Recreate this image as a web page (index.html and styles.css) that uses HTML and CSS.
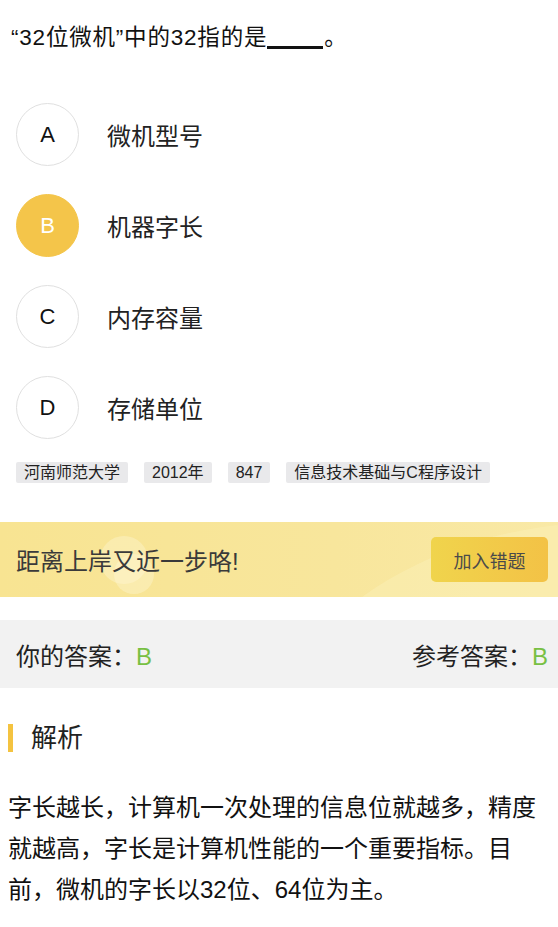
FILE: index.html
```html
<!DOCTYPE html>
<html lang="zh">
<head>
<meta charset="utf-8">
<link rel="stylesheet" href="styles.css">
</head>
<body>
<div class="page">
  <div class="question">“32位微机”中的32指的是<span class="blank"></span>。</div>
  <ul class="options">
    <li class="option"><span class="letter">A</span><span class="label">微机型号</span></li>
    <li class="option selected"><span class="letter">B</span><span class="label">机器字长</span></li>
    <li class="option"><span class="letter">C</span><span class="label">内存容量</span></li>
    <li class="option"><span class="letter">D</span><span class="label">存储单位</span></li>
  </ul>
  <div class="tags">
    <span class="tag">河南师范大学</span>
    <span class="tag">2012年</span>
    <span class="tag">847</span>
    <span class="tag">信息技术基础与C程序设计</span>
  </div>
  <div class="banner">
    <span class="bubble b1"></span>
    <span class="bubble b2"></span>
    <span class="arc"></span>
    <span class="banner-text">距离上岸又近一步咯!</span>
    <button class="btn">加入错题</button>
  </div>
  <div class="answers">
    <span>你的答案：<b class="ok">B</b></span>
    <span>参考答案：<b class="ok">B</b></span>
  </div>
  <h2 class="section-title">解析</h2>
  <p class="analysis">字长越长，计算机一次处理的信息位就越多，精度就越高，字长是计算机性能的一个重要指标。目前，微机的字长以32位、64位为主。</p>
</div>
</body>
</html>
```
FILE: styles.css
```css
* { box-sizing: border-box; }
html, body { margin: 0; padding: 0; background: #fff; }
body {
  font-family: "Liberation Sans", "Noto Sans CJK SC", sans-serif;
  color: #222;
}
.page { width: 558px; }
.question {
  font-size: 22.5px;
  line-height: 30px;
  height: 53px;
  padding: 23px 10px 0 11px;
  letter-spacing: 0.8px;
  color: #111;
}
.blank {
  display: inline-block;
  width: 56px;
  height: 3px;
  background: #111;
  vertical-align: -4px;
  margin: 0 1px 0 0;
}
.options {
  list-style: none;
  margin: 50px 0 0 0;
  padding: 0 0 0 16px;
}
.option {
  display: flex;
  align-items: center;
  height: 63px;
  margin-bottom: 28px;
}
.letter {
  width: 63px;
  height: 63px;
  border-radius: 50%;
  border: 1px solid #e0e0e0;
  display: flex;
  align-items: center;
  justify-content: center;
  font-size: 22px;
  color: #111;
  flex: none;
}
.selected .letter {
  background: #f4c54a;
  border-color: #f4c54a;
  color: #fff;
}
.label {
  margin-left: 28px;
  font-size: 24px;
  color: #222;
}
.tags {
  display: flex;
  gap: 16px;
  padding-left: 16px;
  margin-top: -5px;
}
.tag {
  background: #e9e9eb;
  border-radius: 2px;
  font-size: 16px;
  line-height: 21px;
  height: 21px;
  padding: 0 8px;
  color: #222;
}
.banner {
  position: relative;
  overflow: hidden;
  margin-top: 39px;
  height: 75px;
  background: linear-gradient(90deg, #f8e492 0%, #f8e69c 60%, #f9e9a6 100%);
  display: flex;
  align-items: center;
  justify-content: space-between;
  padding: 0 10px 0 16px;
}
.bubble {
  position: absolute;
  border-radius: 50%;
  background: rgba(255, 250, 220, 0.35);
}
.b1 { width: 48px; height: 48px; left: 100px; top: 14px; }
.b2 { width: 40px; height: 40px; left: 114px; top: 32px; }
.arc {
  position: absolute;
  left: 262px;
  top: 0;
  width: 700px;
  height: 500px;
  border-radius: 50%;
  background: rgba(250, 238, 178, 0.6);
}
.banner-text {
  position: relative;
  font-size: 24px;
  color: #3a3a3a;
}
.btn {
  position: relative;
  width: 117px;
  height: 45px;
  border: none;
  border-radius: 5px;
  background: linear-gradient(90deg, #f0d44c, #f3c246);
  font-family: inherit;
  font-size: 18px;
  color: #4a4a4a;
}
.answers {
  margin-top: 23px;
  height: 68px;
  background: #f2f2f2;
  display: flex;
  align-items: center;
  justify-content: space-between;
  padding: 0 10px 0 16px;
  font-size: 24px;
  color: #222;
}
.ok { font-weight: normal; color: #78c043; }
.section-title {
  margin: 36px 0 0 8px;
  border-left: 5px solid #f4c340;
  padding-left: 18px;
  font-size: 26px;
  font-weight: normal;
  line-height: 28px;
  height: 28px;
  color: #222;
}
.analysis {
  margin: 35px 0 0 0;
  padding: 0 8px;
  font-size: 24px;
  line-height: 41px;
  color: #111;
}
```
